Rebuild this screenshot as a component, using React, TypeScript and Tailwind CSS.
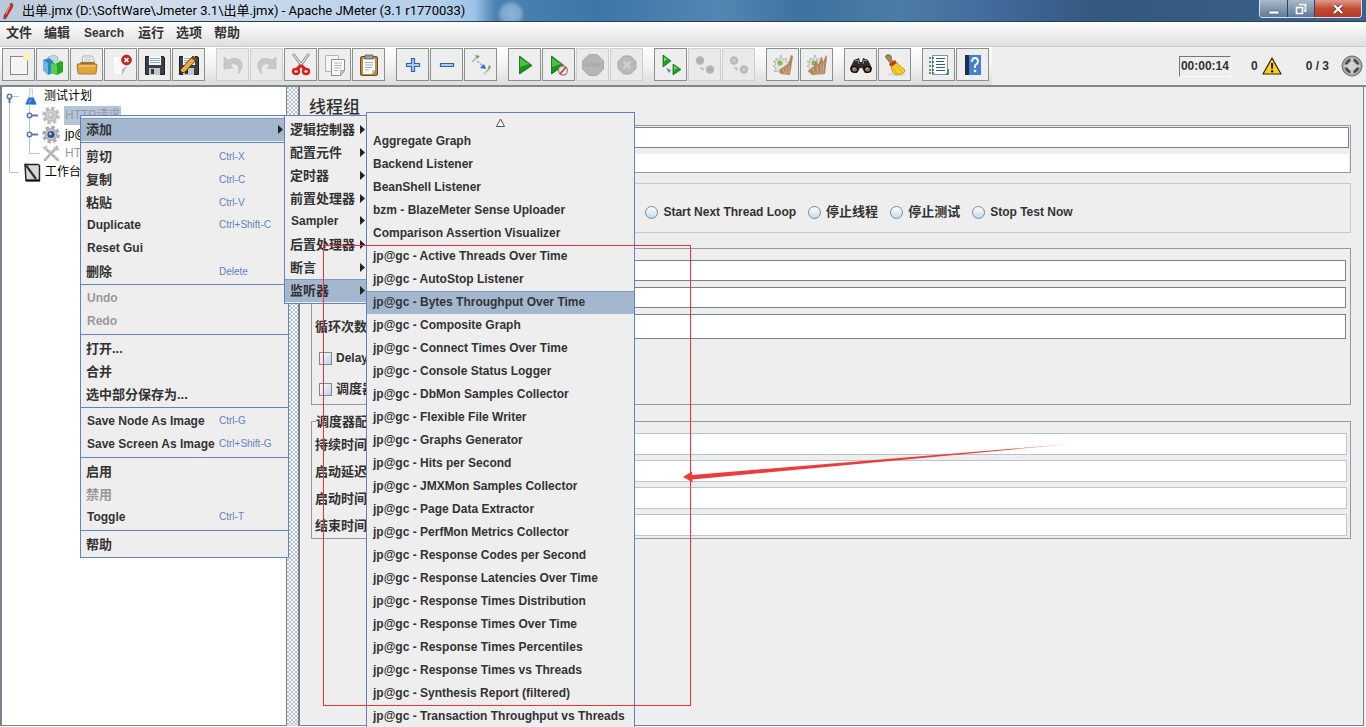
import React from "react";

type Item = { label: string; keys?: string; off?: boolean; sub?: boolean; on?: boolean };

const cjk = (s: string) => /[\u4e00-\u9fff]/.test(s);
const size = (s: string) => (cjk(s) ? "text-[13px]" : "text-[12px]");

/* ---------- toolbar icons (24 x 24 grid) ---------- */

const Svg = ({ children }: { children: React.ReactNode }) => (
  <svg viewBox="0 0 24 24" className="h-6 w-6" aria-hidden="true">
    {children}
  </svg>
);

const NewIcon = () => (
  <Svg>
    <rect x="3.5" y="3.5" width="17" height="18" fill="#f4f4f4" stroke="#8a8a8a" />
    <circle cx="19.5" cy="4.5" r="3.5" fill="#f7f2a0" />
    <circle cx="19.5" cy="4.5" r="1.5" fill="#fffbd8" />
  </Svg>
);
const TemplatesIcon = () => (
  <Svg>
    <path d="M7 4l6-2 4 2v12l-8 3z" fill="#c9d4dc" stroke="#8aa" strokeWidth=".6" />
    <path d="M2 7l6-2 4 3v12l-5 2-5-5z" fill="#2b86c8" />
    <path d="M2 7l5 3v12l-5-5z" fill="#6db6e6" />
    <path d="M10 10l8-3 4 2v10l-6 3-6-2z" fill="#27a827" />
    <path d="M10 10l6 2v10l-6-2z" fill="#58cf50" />
    <path d="M12 9l6-2 2 1-6 3z" fill="#b9f0b0" />
  </Svg>
);
const OpenIcon = () => (
  <Svg>
    <path d="M7 9l1-6h9l3 6z" fill="#fff" stroke="#999" strokeWidth=".8" />
    <path d="M9 5h7M9 7h8" stroke="#aaa" strokeWidth=".8" />
    <path d="M3 12l3-3h13l2 3z" fill="#a8772a" />
    <path d="M2 12q0-1 1-1h18q1 0 1 1l-1 8q0 1-1 1H4q-1 0-1-1z" fill="#e0a63c" stroke="#9a6a1c" strokeWidth=".8" />
    <path d="M4 13h16" stroke="#f8d88a" />
  </Svg>
);
const CloseIcon = () => (
  <Svg>
    <path d="M5 4h12v12l-4 5H5z" fill="#fafafa" />
    <path d="M17 13l-4 8v-5z" fill="#c4c4c4" />
    <path d="M13 21l4-7" stroke="#aaa" />
    <circle cx="17.5" cy="7" r="5" fill="#c22a1c" stroke="#8f1a12" strokeWidth=".6" />
    <path d="M15.500 5l4 4m0-4l-4 4" stroke="#fff" strokeWidth="1.700" />
  </Svg>
);
const floppy = (
  <>
    <path d="M2.500 3.500h18l1 1v17h-19z" fill="#3b4046" stroke="#1d2024" />
    <path d="M6 3h12v9H6z" fill="#f4f8fc" />
    <path d="M7 5.500h10M7 7.500h10M7 9.500h10" stroke="#8fb0d4" />
    <path d="M6 15h11v7H6z" fill="#c3c8cc" />
    <path d="M8 16h3v5H8z" fill="#33383c" />
  </>
);
const SaveIcon = () => <Svg>{floppy}</Svg>;
const SaveAsIcon = () => (
  <Svg>
    {floppy}
    <path d="M2 21l2-5L16 3l4 3L8 19z" fill="#e8b040" stroke="#54380f" />
    <path d="M16 3l4 3-2 2-4-3z" fill="#7c4a1c" />
    <path d="M2 21l1.500-3.500 2 2z" fill="#222" />
  </Svg>
);
const UndoIcon = () => (
  <Svg>
    <path d="M3 4l4 3q5-3 10-1t4 8q-1 4-4 7 2-6-1-9t-7 0l3 3-9 1z" fill="#c8c8c8" stroke="#bababa" strokeWidth=".6" />
  </Svg>
);
const RedoIcon = () => (
  <Svg>
    <path d="M21 4l-4 3Q12 4 7 6t-4 8q1 4 4 7-2-6 1-9t7 0l-3 3 9 1z" fill="#c8c8c8" stroke="#bababa" strokeWidth=".6" />
  </Svg>
);
const CutIcon = () => (
  <Svg>
    <path d="M5 2l10 14M19 2L9 16" stroke="#8a8f94" strokeWidth="3" strokeLinecap="round" />
    <path d="M5 2l10 14M19 2L9 16" stroke="#e8eaec" strokeWidth="1.200" strokeLinecap="round" />
    <path d="M12 12l4 4M12 12l-4 4" stroke="#d81e1e" strokeWidth="3" />
    <ellipse cx="7" cy="18.500" rx="3" ry="2.500" fill="#f6dcdc" stroke="#d81e1e" strokeWidth="2.400" />
    <ellipse cx="17" cy="18.500" rx="3" ry="2.500" fill="#f6dcdc" stroke="#d81e1e" strokeWidth="2.400" />
  </Svg>
);
const CopyIcon = () => (
  <Svg>
    <path d="M2.500 2.500h13v16h-13z" fill="#f6f6f6" stroke="#b4b4b4" />
    <path d="M8.500 6.500h13v11l-4 5h-9z" fill="#fafafa" stroke="#8e8e8e" />
    <path d="M11 10h8M11 12.500h8M11 15h7M11 17.500h4" stroke="#b4b4b4" />
    <path d="M17.500 22.500v-5h4z" fill="#cfcfcf" stroke="#8e8e8e" strokeWidth=".7" />
  </Svg>
);
const PasteIcon = () => (
  <Svg>
    <rect x="3.500" y="3.500" width="17" height="19" rx="1.500" fill="#b98a48" stroke="#6f4c1c" />
    <path d="M6 6h12v11l-3 4H6z" fill="#fbfbfb" />
    <path d="M8 9.500h8M8 12h8M8 14.500h7M8 17h4" stroke="#9ab0c8" />
    <path d="M15 21v-4h3z" fill="#c8c8c8" />
    <path d="M8 2h8v4H8z" fill="#9a9a94" stroke="#555" strokeWidth=".7" />
  </Svg>
);
const PlusIcon = () => (
  <Svg>
    <path d="M10.500 5.500h3v5h5v3h-5v5h-3v-5h-5v-3h5z" fill="#a9cdf2" stroke="#2e62ad" strokeWidth="1.200" />
  </Svg>
);
const MinusIcon = () => (
  <Svg>
    <path d="M5.500 10.500h13v3h-13z" fill="#a9cdf2" stroke="#2e62ad" strokeWidth="1.200" />
  </Svg>
);
const ToggleIcon = () => (
  <Svg>
    <path d="M3 9l4-4" stroke="#b8c4b0" strokeWidth="2" />
    <path d="M6 2l5 1-3 3z" fill="#6fa05a" />
    <path d="M8 8l8 7" stroke="#8fb6e4" strokeWidth="1.500" strokeDasharray="3 1" />
    <path d="M17 16l-6-1 4-4z" fill="#2f6fd0" />
    <path d="M17 19l4-4" stroke="#a8c098" strokeWidth="2" />
    <path d="M20 12l2 2-3 2z" fill="#5c9a48" />
    <path d="M14 20l4-1-2 3z" fill="#b4c8b0" />
  </Svg>
);
const play = (
  <>
    <path d="M6.500 3l12.500 9.500L6.500 21z" fill="#15931b" stroke="#0b6a12" strokeWidth=".8" />
    <path d="M7 5l9 6-9 3z" fill="#4fbf4a" />
  </>
);
const StartIcon = () => <Svg>{play}</Svg>;
const StartNoTimersIcon = () => (
  <Svg>
    <g transform="translate(-2 0)">{play}</g>
    <circle cx="16" cy="17.500" r="4.500" fill="#e9e4e8" stroke="#a8848c" strokeWidth="1.300" />
    <path d="M13 21l6-7" stroke="#d03030" strokeWidth="1.500" />
  </Svg>
);
const StopIcon = () => (
  <Svg>
    <path d="M8 1.500h8L22.500 8v8L16 22.500H8L1.500 16V8z" fill="#b5b5b5" stroke="#a8a8a8" />
    <path d="M4 10h16v4H4z" fill="#adadad" />
  </Svg>
);
const ShutdownIcon = () => (
  <Svg>
    <path d="M8.500 3h7L21 8.500v7L15.500 21h-7L3 15.500v-7z" fill="#b8b8b8" stroke="#aaa" />
    <path d="M8.500 8.500l7 7m0-7l-7 7" stroke="#cfcfcf" strokeWidth="2.500" />
  </Svg>
);
const RemoteStartIcon = () => (
  <Svg>
    <path d="M4 2l8 6-8 6z" fill="#22a026" stroke="#0b6a12" strokeWidth=".7" />
    <path d="M14 11l8 5.500-8 5.500z" fill="#22a026" stroke="#0b6a12" strokeWidth=".7" />
    <path d="M5 4l3 2.500-3 2zM15 13l3 2-3 2z" fill="#7bdc70" />
    <path d="M7 15l5 2-2 3z" fill="#6f7fa8" />
  </Svg>
);
const RemoteStopIcon = () => (
  <Svg>
    <circle cx="7" cy="7.500" r="4.200" fill="#b4b4b4" />
    <circle cx="17" cy="16.500" r="4.200" fill="#b4b4b4" />
    <path d="M5 7.500h4M15 16.500h4" stroke="#a6a6a6" strokeWidth="1.500" />
    <path d="M6 14l5 1-1 3z" fill="#bdbdbd" />
  </Svg>
);
const RemoteShutIcon = () => (
  <Svg>
    <circle cx="7" cy="7.500" r="4.200" fill="#b8b8b8" />
    <circle cx="17" cy="16.500" r="4.200" fill="#b8b8b8" />
    <path d="M5.500 6l3 3m0-3l-3 3M15.500 15l3 3m0-3l-3 3" stroke="#d0d0d0" strokeWidth="1.200" />
    <path d="M6 14l5 1-1 3z" fill="#bdbdbd" />
  </Svg>
);
const gear = (
  <path d="M2 8l3 1 0-4 3 2 2-5 2 5 4-2-1 4 3 1-3 3 1 4-4 0-2 4-3-3-4 1 2-4-3-2 3-2z" fill="#dfe3dc" stroke="#a9aea6" strokeWidth=".8" />
);
const ClearIcon = () => (
  <Svg>
    {gear}
    <circle cx="9" cy="10" r="2.500" fill="#84b84c" />
    <path d="M8 17l9-6 3-9 2 1-3 19-9-1z" fill="#b08560" />
    <path d="M12 16l2 5M15 14l1 8M18 12l0 9" stroke="#d3b394" />
  </Svg>
);
const ClearAllIcon = () => (
  <Svg>
    {gear}
    <circle cx="9" cy="10" r="2.500" fill="#84b84c" />
    <path d="M3 18l5-4 4-7 1 5 4-9 1 6 3-7 1 2-2 17-13 1z" fill="#b08560" />
    <path d="M8 16l2 5M12 13l1 9M16 11l0 10M19 9l-1 11" stroke="#d3b394" />
  </Svg>
);
const SearchIcon = () => (
  <Svg>
    <path d="M5 7l5-2 1 4h2l1-4 5 2 4 8-1 4-6 1-3-5h-2l-3 5-6-1-1-4z" fill="#2b2c2e" />
    <path d="M6 8l3-1 1 4M18 8l-3-1-1 4" stroke="#8d9196" fill="none" />
    <ellipse cx="5.500" cy="16.500" rx="3.300" ry="2.800" fill="#9a6f50" stroke="#101010" strokeWidth="1.300" />
    <ellipse cx="18.500" cy="16.500" rx="3.300" ry="2.800" fill="#9a6f50" stroke="#101010" strokeWidth="1.300" />
    <path d="M4 16l2-1M17 16l2-1" stroke="#e6c6aa" />
  </Svg>
);
const BroomIcon = () => (
  <Svg>
    <ellipse cx="14" cy="21" rx="9" ry="2" fill="#d5dde4" />
    <path d="M2.500 3q2.500-3 5.500 0 1 2 0 3l3 4-3 1-3-4q-2-1-2.500-4z" fill="#b08a4a" stroke="#6f5220" strokeWidth=".8" />
    <path d="M6 11l6-4 2 3-6 4z" fill="#c8361c" />
    <path d="M8 14l6-4 8 7q0 4-9 5-4-2-5-8z" fill="#f6cf24" stroke="#b88a10" strokeWidth=".8" />
    <path d="M10 14l4 7M13 12l6 7" stroke="#dcb01c" />
  </Svg>
);
const ListIcon = () => (
  <Svg>
    <rect x="5.500" y="2.500" width="15" height="19" fill="#fcfdff" stroke="#7f95b4" />
    <path d="M9 5.500h9M9 8.500h8M9 11.500h9M9 14.500h9M9 17.500h9" stroke="#34579c" strokeWidth="1.200" />
    <path d="M2 5h5M2 9h5M2 13h5M2 17h5M2 20h5" stroke="#3e6a52" strokeWidth="1.400" strokeDasharray="2 1" />
    <path d="M21 16v5h-2" stroke="#2d8040" strokeWidth="1.500" fill="none" />
  </Svg>
);
const HelpIcon = () => (
  <Svg>
    <path d="M4 2h16v20H4z" fill="#4480cf" />
    <path d="M4 2h4v20H4z" fill="#1f2f4c" />
    <path d="M11 9q0-4 3-4t3 3.500q0 2-3 4V15" fill="none" stroke="#fff" strokeWidth="1.800" />
    <circle cx="14" cy="18" r="1.300" fill="#fff" />
  </Svg>
);

type Tool = [string, () => React.JSX.Element, boolean?];
const tools: Tool[][] = [
  [["New", NewIcon], ["Templates", TemplatesIcon], ["Open", OpenIcon], ["Close", CloseIcon], ["Save", SaveIcon], ["Save as", SaveAsIcon]],
  [["Undo", UndoIcon, true], ["Redo", RedoIcon, true], ["Cut", CutIcon], ["Copy", CopyIcon], ["Paste", PasteIcon]],
  [["Expand all", PlusIcon], ["Collapse all", MinusIcon], ["Toggle", ToggleIcon]],
  [["Start", StartIcon], ["Start no pauses", StartNoTimersIcon], ["Stop", StopIcon, true], ["Shutdown", ShutdownIcon, true]],
  [["Remote start all", RemoteStartIcon], ["Remote stop all", RemoteStopIcon, true], ["Remote shutdown all", RemoteShutIcon, true]],
  [["Clear", ClearIcon], ["Clear all", ClearAllIcon]],
  [["Search", SearchIcon], ["Reset search", BroomIcon]],
  [["Function helper", ListIcon], ["Help", HelpIcon]],
];

/* ---------- window chrome ---------- */

function TitleBar() {
  return (
    <header className="flex h-[22px] shrink-0 items-start border-b border-[#27405e] bg-[radial-gradient(circle_at_511px_14px,#8db4d6_0px,#7da8cd_9px,transparent_14px),linear-gradient(90deg,#b9c9da_0px,#d3dfeb_120px,#c3d6ea_300px,#b4d0ec_440px,#9cc3e6_475px,#4b82b1_495px,#3e76a8_600px,#5486b2_720px,#3f729f_800px,#4c7ba6_900px,#40699a_1000px,#34587f_1100px,#3b628c_1366px)]">
      <svg viewBox="0 0 14 20" className="mt-px ml-px h-5 w-3.5" aria-hidden="true">
        <path d="M10 2q3 1 1 5L5 17l-2 1 0-3z" fill="#cf2a2a" stroke="#7c1c24" strokeWidth=".7" />
        <path d="M9 4L5 13" stroke="#f4a39c" />
      </svg>
      <h1 className="ml-[7px] grow truncate font-['Roboto','Noto_Sans_CJK_SC',sans-serif] text-[13px] leading-[21px] text-black">
        出单.jmx (D:\SoftWare\Jmeter 3.1\出单.jmx) - Apache JMeter (3.1 r1770033)
      </h1>
      <div className="mr-1 flex h-[18px] overflow-hidden rounded-b border border-t-0 border-[#d5e0ea]">
        <button aria-label="Minimize" className="flex w-[28px] items-center justify-center border-r border-[#30435a] bg-linear-to-b from-[#a9b9c9] to-[#5f7b98]">
          <svg viewBox="0 0 12 12" className="h-3 w-3"><path d="M1 8h10v3H1z" fill="#fff" stroke="#4b5663" strokeWidth=".6" /></svg>
        </button>
        <button aria-label="Restore" className="flex w-[27px] items-center justify-center border-r border-[#30435a] bg-linear-to-b from-[#a9b9c9] to-[#5f7b98]">
          <svg viewBox="0 0 12 12" className="h-3 w-3">
            <path d="M4 1.500h6.500V8H9M1.500 4.500h6v6h-6z" fill="none" stroke="#fff" strokeWidth="1.600" />
          </svg>
        </button>
        <button aria-label="Close" className="flex w-[46px] items-center justify-center bg-linear-to-b from-[#dc9a8c] via-[#c54a34] to-[#b43a26]">
          <svg viewBox="0 0 12 12" className="h-3 w-3">
            <path d="M2 2l8 8m0-8l-8 8" stroke="#5c2a24" strokeWidth="3.600" />
            <path d="M2 2l8 8m0-8l-8 8" stroke="#fff" strokeWidth="2.400" />
          </svg>
        </button>
      </div>
    </header>
  );
}

function MenuBar() {
  return (
    <nav className="flex h-[25px] shrink-0 items-center gap-3 border-b border-[#ccc] bg-linear-to-b from-white to-[#dedede] px-1.5 pb-0.5 font-bold">
      {["文件", "编辑", "Search", "运行", "选项", "帮助"].map((m) => (
        <button key={m} className={`leading-[20px] ${cjk(m) ? "text-[13px]" : "px-0.5 text-[12px]"}`}>{m}</button>
      ))}
    </nav>
  );
}

function Toolbar() {
  return (
    <div className="flex h-[40px] shrink-0 items-stretch justify-between border-b-2 border-[#7f8888]">
      <div className="flex items-start gap-[11px] bg-linear-to-b from-white via-[#f2f2f2] to-[#dcdcdc] pt-px pr-[3px] pl-0.5">
        {tools.map((group, g) => (
          <div key={g} className="flex gap-px">
            {group.map(([name, Icon, off]) => (
              <button
                key={name}
                aria-label={name}
                disabled={off}
                className={`flex h-[33px] w-[33px] items-center justify-center border ${off ? "border-[#cfcfcf] bg-[#eaeaea]" : "border-[#8a9090] bg-[#eee]"}`}
              >
                <Icon />
              </button>
            ))}
          </div>
        ))}
      </div>
      <div className="flex items-center pr-[3px] font-bold text-[12px]">
        <output className="border border-t-[#777] border-r-white border-b-white border-l-[#777] px-px text-center leading-[19px]">00:00:14</output>
        <span className="ml-5">0</span>
        <svg viewBox="0 0 20 18" className="ml-1 h-[18px] w-5" aria-label="Warnings">
          <path d="M10 1l9 16H1z" fill="#f8d21c" stroke="#2c2608" strokeWidth="1.200" strokeLinejoin="round" />
          <path d="M9 6h2.200l-.4 6H9.400z" fill="#1c1804" />
          <circle cx="10.100" cy="14.300" r="1.200" fill="#1c1804" />
        </svg>
        <span className="ml-6">0 / 3</span>
        <svg viewBox="0 0 22 22" className="ml-3 h-[22px] w-[22px]" aria-hidden="true">
          <circle cx="11" cy="11" r="10" fill="#a8a8a8" stroke="#6b6b6b" />
          <circle cx="11" cy="11" r="6" fill="none" stroke="#4c4c4c" strokeWidth="3" />
          <path d="M11 3v16M3 11h16" stroke="#c9c9c9" strokeWidth="3" />
          <circle cx="11" cy="11" r="4.500" fill="#d2d2d2" />
        </svg>
      </div>
    </div>
  );
}

/* ---------- tree ---------- */

const guide = "#b3c6de";
const knob = "#5a76aa";

const GearGlyph = ({ fill, core }: { fill: string; core: string }) => (
  <svg viewBox="0 0 20 19" className="h-[19px] w-5" aria-hidden="true">
    <circle cx="10" cy="9.500" r="7.400" fill="none" stroke={fill} strokeWidth="3" strokeDasharray="3.500 2.312" />
    <circle cx="10" cy="9.500" r="6.500" fill={fill} />
    <circle cx="10" cy="9.500" r="5" fill="#fff" fillOpacity=".35" />
    <circle cx="10" cy="9.500" r="3.600" fill={core} />
    <circle cx="9.300" cy="8.700" r="1.500" fill="#fff" fillOpacity=".6" />
  </svg>
);

function Tree() {
  return (
    <ul className="flex flex-col text-[12px] leading-[19px] text-black">
      <li className="flex h-[19px]">
        <svg viewBox="0 0 22 19" className="h-[19px] w-[22px]" aria-hidden="true">
          <path d="M7.500 13v6M10 9.500h7" stroke={guide} />
          <circle cx="7.500" cy="9.500" r="2.200" fill="#fff" stroke={knob} strokeWidth="1.500" />
          <path d="M7.500 12v4" stroke={knob} strokeWidth="2" />
        </svg>
        <svg viewBox="0 0 14 19" className="h-[19px] w-3.5" aria-hidden="true">
          <path d="M5.500 2h3v6l4 9h-11l4-9z" fill="#eef4fa" stroke="#b4c4d4" strokeWidth=".7" />
          <path d="M4.500 10.500h5l3 7h-11z" fill="#2472c8" />
          <path d="M7 12l-2 4" stroke="#8cc0f0" />
        </svg>
        <span className="ml-1.5">测试计划</span>
      </li>
      <li className="flex h-[19px]">
        <svg viewBox="0 0 39 19" className="h-[19px] w-[39px]" aria-hidden="true">
          <path d="M7.500 0v19M27.500 0v19" stroke={guide} />
          <circle cx="27.500" cy="9.500" r="2.200" fill="#fff" stroke={knob} strokeWidth="1.500" />
          <path d="M30 9.500h6" stroke={knob} strokeWidth="2" />
        </svg>
        <GearGlyph fill="#bdbdbd" core="#c2c2c2" />
        <span className="ml-[3px] bg-[#b3c6dc] px-px text-[#999]">HTTP请求</span>
      </li>
      <li className="flex h-[19px]">
        <svg viewBox="0 0 39 19" className="h-[19px] w-[39px]" aria-hidden="true">
          <path d="M7.500 0v19M27.500 0v19" stroke={guide} />
          <circle cx="27.500" cy="9.500" r="2.200" fill="#fff" stroke={knob} strokeWidth="1.500" />
          <path d="M30 9.500h6" stroke={knob} strokeWidth="2" />
        </svg>
        <GearGlyph fill="#a9adb4" core="#2e4f86" />
        <span className="ml-1">jp@gc</span>
      </li>
      <li className="flex h-[19px]">
        <svg viewBox="0 0 39 19" className="h-[19px] w-[39px]" aria-hidden="true">
          <path d="M7.500 0v19M27.500 0v9.500h10" stroke={guide} fill="none" />
        </svg>
        <svg viewBox="0 0 20 19" className="h-[19px] w-5" aria-hidden="true">
          <path d="M4 4l13 12M16 3L4 16" stroke="#b6b6b6" strokeWidth="2.600" strokeLinecap="round" />
          <path d="M2 3l4 3M3 5l3-3M13 3l2 3 3-1" stroke="#c4c4c4" strokeWidth="2" fill="none" />
        </svg>
        <span className="ml-1 text-[#999]">HTTP</span>
      </li>
      <li className="flex h-[19px]">
        <svg viewBox="0 0 21 19" className="h-[19px] w-[21px]" aria-hidden="true">
          <path d="M7.500 0v9.500h9" stroke={guide} fill="none" />
        </svg>
        <svg viewBox="0 0 18 19" className="h-[19px] w-[18px]" aria-hidden="true">
          <path d="M2 1.500h13l1.500 1v15H3z" fill="#d8d8d8" stroke="#1e1e1e" strokeWidth="1.400" />
          <path d="M2 1l11 15" stroke="#333" strokeWidth="2.200" />
          <path d="M3 17.500h14" stroke="#111" strokeWidth="2" />
        </svg>
        <span className="ml-1">工作台</span>
      </li>
    </ul>
  );
}

/* ---------- thread group form ---------- */

const field = "min-w-0 flex-1 border bg-white px-1 outline-none";

function TextRow({ id, label, h, off }: { id: string; label: string; h: string; off?: boolean }) {
  return (
    <div className={`flex items-center gap-1 ${h}`}>
      <label htmlFor={id} className={`w-[130px] shrink-0 leading-[15px] ${size(label)}`}>{label}</label>
      <input id={id} disabled={off} className={`${field} h-full ${off ? "border-[#bcc4cf]" : "border-[#7a8288]"}`} />
    </div>
  );
}

function Check({ id, label }: { id: string; label: string }) {
  return (
    <div className="flex h-[30px] items-center gap-1 pl-1">
      <input id={id} type="checkbox" className="h-[13px] w-[13px] appearance-none border border-[#7a8a99] bg-linear-to-br from-white to-[#bcd3e8]" />
      <label htmlFor={id} className={size(label)}>{label}</label>
    </div>
  );
}

function ThreadGroup() {
  const actions = ["继续", "Start Next Thread Loop", "停止线程", "停止测试", "Stop Test Now"];
  return (
    <form className="flex flex-col pr-3 pl-[11px] font-bold">
      <h2 className="-ml-0.5 pt-2 pb-1 text-[17px] leading-[26px] font-medium">线程组</h2>

      <div className="flex flex-col gap-1.5 border border-[#969a9c] pt-px pr-px pl-1">
        <TextRow id="name" label="名称:" h="h-[21px]" />
        <div className="flex h-[18px] items-center gap-1">
          <label htmlFor="comment" className="w-[130px] shrink-0 text-[13px]">注释:</label>
          <input id="comment" className="h-full min-w-0 flex-1 bg-white px-1 outline-none" />
        </div>
      </div>

      <div role="radiogroup" className="mt-2.5 flex h-[50px] items-center justify-center gap-3 border border-[#c8c8c8] pt-2">
        {actions.map((a) => (
          <label key={a} className={`flex items-center gap-[5px] leading-[20px] ${size(a)}`}>
            <input type="radio" name="onerror" className="h-[13px] w-[13px] appearance-none rounded-full border border-[#7a8a99] bg-linear-to-b from-white to-[#c4d8ea]" />
            {a}
          </label>
        ))}
      </div>

      <section className="mt-[15px] flex flex-col border border-[#969a9c] pt-[11px] pr-1 pl-[3px]">
        <div className="flex flex-col gap-1.5">
          <TextRow id="threads" label="线程数:" h="h-[21px]" />
          <TextRow id="ramp" label="Ramp-Up:" h="h-[21px]" />
          <TextRow id="loops" label="循环次数" h="h-[25px]" />
        </div>
        <div className="mt-1 flex flex-col gap-px">
          <Check id="delay" label="Delay" />
          <Check id="sched" label="调度器" />
        </div>
      </section>

      <fieldset className="relative mt-4 flex flex-col gap-[5px] border border-[#969a9c] pt-[11px] pr-[3px] pb-0.5 pl-[3px]">
        <legend className="absolute -top-2.5 left-1 bg-[#eee] text-[13px] leading-[20px]">调度器配置</legend>
        <TextRow id="duration" label="持续时间" h="h-[22px]" off />
        <TextRow id="startDelay" label="启动延迟" h="h-[22px]" off />
        <TextRow id="startTime" label="启动时间" h="h-[22px]" off />
        <TextRow id="endTime" label="结束时间" h="h-[22px]" off />
      </fieldset>
    </form>
  );
}

/* ---------- popup menus ---------- */

const contextMenu: Item[][] = [
  [{ label: "添加", sub: true, on: true }],
  [
    { label: "剪切", keys: "Ctrl-X" },
    { label: "复制", keys: "Ctrl-C" },
    { label: "粘贴", keys: "Ctrl-V" },
    { label: "Duplicate", keys: "Ctrl+Shift-C" },
    { label: "Reset Gui" },
    { label: "删除", keys: "Delete" },
  ],
  [{ label: "Undo", off: true }, { label: "Redo", off: true }],
  [{ label: "打开..." }, { label: "合并" }, { label: "选中部分保存为..." }],
  [{ label: "Save Node As Image", keys: "Ctrl-G" }, { label: "Save Screen As Image", keys: "Ctrl+Shift-G" }],
  [{ label: "启用" }, { label: "禁用", off: true }, { label: "Toggle", keys: "Ctrl-T" }],
  [{ label: "帮助" }],
];

const addMenu: Item[] = ["逻辑控制器", "配置元件", "定时器", "前置处理器", "Sampler", "后置处理器", "断言", "监听器"].map(
  (label) => ({ label, sub: true, on: label === "监听器" }),
);

const listeners: Item[] = [
  "Aggregate Graph",
  "Backend Listener",
  "BeanShell Listener",
  "bzm - BlazeMeter Sense Uploader",
  "Comparison Assertion Visualizer",
  "jp@gc - Active Threads Over Time",
  "jp@gc - AutoStop Listener",
  "jp@gc - Bytes Throughput Over Time",
  "jp@gc - Composite Graph",
  "jp@gc - Connect Times Over Time",
  "jp@gc - Console Status Logger",
  "jp@gc - DbMon Samples Collector",
  "jp@gc - Flexible File Writer",
  "jp@gc - Graphs Generator",
  "jp@gc - Hits per Second",
  "jp@gc - JMXMon Samples Collector",
  "jp@gc - Page Data Extractor",
  "jp@gc - PerfMon Metrics Collector",
  "jp@gc - Response Codes per Second",
  "jp@gc - Response Latencies Over Time",
  "jp@gc - Response Times Distribution",
  "jp@gc - Response Times Over Time",
  "jp@gc - Response Times Percentiles",
  "jp@gc - Response Times vs Threads",
  "jp@gc - Synthesis Report (filtered)",
  "jp@gc - Transaction Throughput vs Threads",
].map((label) => ({ label, on: label.includes("Bytes") }));

const popup = "absolute border border-[#6382bf] bg-[#eee] font-bold";

function MenuItem({ item, arrow = "mr-px" }: { item: Item; arrow?: string }) {
  return (
    <button
      role="menuitem"
      disabled={item.off}
      className={`flex h-[23px] w-full items-center border-t pl-[5px] text-left whitespace-nowrap ${cjk(item.label) ? "pb-px text-[13px]" : "pb-[3px] text-[12px]"} ${item.on ? "border-[#7f9ac0] bg-[#a3b8cf]" : "border-transparent"} ${item.off ? "text-[#999]" : ""}`}
    >
      <span className={`${item.keys ? "w-[133px]" : "grow"} ${cjk(item.label) ? "" : "pl-px"}`}>{item.label}</span>
      {item.keys && <kbd className="font-['Liberation_Sans',sans-serif] text-[10px] font-normal text-[#6382bf]">{item.keys}</kbd>}
      {item.sub && (
        <svg viewBox="0 0 5 9" className={`h-[9px] w-[5px] shrink-0 ${arrow}`} aria-hidden="true">
          <path d="M0 0l5 4.500L0 9z" fill="#222" />
        </svg>
      )}
    </button>
  );
}

export default function App() {
  return (
    <div className="relative flex h-screen flex-col overflow-hidden bg-[#eee] font-['Liberation_Sans','Noto_Sans_CJK_SC',sans-serif] text-[#333]">
      <TitleBar />
      <MenuBar />
      <Toolbar />

      <main className="flex min-h-0 flex-1 border-b border-white pr-0.5">
        <aside className="w-[287px] shrink-0 overflow-hidden border-r border-b border-l-2 border-[#7a8090] bg-white">
          <Tree />
        </aside>
        <div className="w-[11px] shrink-0 bg-[#f4f6f9] bg-[radial-gradient(circle_at_1px_1px,#a3afbf_0.6px,transparent_1px),radial-gradient(circle_at_3px_3px,#a3afbf_0.6px,transparent_1px)] bg-size-[4px_4px]" />
        <div className="min-w-0 flex-1 border-r border-b border-l-2 border-[#7a8090]">
          <ThreadGroup />
        </div>
      </main>

      <div role="menu" className={`${popup} top-[115px] left-[80px] w-[209px] pt-0.5 pb-px`}>
        {contextMenu.map((group, g) => (
          <div key={g}>
            {g > 0 && <hr className="mt-px mb-0.5 border-[#6382bf]" />}
            {group.map((item) => (
              <MenuItem key={item.label} item={item} arrow="mr-[5px]" />
            ))}
          </div>
        ))}
      </div>

      <div role="menu" className={`${popup} top-[115px] left-[284px] w-[83px] pt-0.5 pb-px`}>
        {addMenu.map((item) => (
          <MenuItem key={item.label} item={item} />
        ))}
      </div>

      <div role="menu" className={`${popup} top-[112px] left-[366px] w-[269px]`}>
        <div className="flex h-[17px] items-center justify-center pt-0.5">
          <svg viewBox="0 0 9 9" className="h-[9px] w-[9px]" aria-hidden="true">
            <path d="M4.500 1L8.500 8.500H.5z" fill="#fff" stroke="#444" strokeWidth=".9" />
          </svg>
        </div>
        {listeners.map((item) => (
          <MenuItem key={item.label} item={item} />
        ))}
      </div>

      <div className="pointer-events-none absolute top-[245px] left-[323px] z-10 h-[461px] w-[368px] border border-[#f03238]" />
      <svg viewBox="0 0 390 42" className="pointer-events-none absolute top-[442px] left-[682px] z-10 h-[42px] w-[390px]" aria-hidden="true">
        <path d="M1 35L10 29.500l0 3.500L388 2 10 37.500l1 3z" fill="#ee3b3b" />
      </svg>
    </div>
  );
}
